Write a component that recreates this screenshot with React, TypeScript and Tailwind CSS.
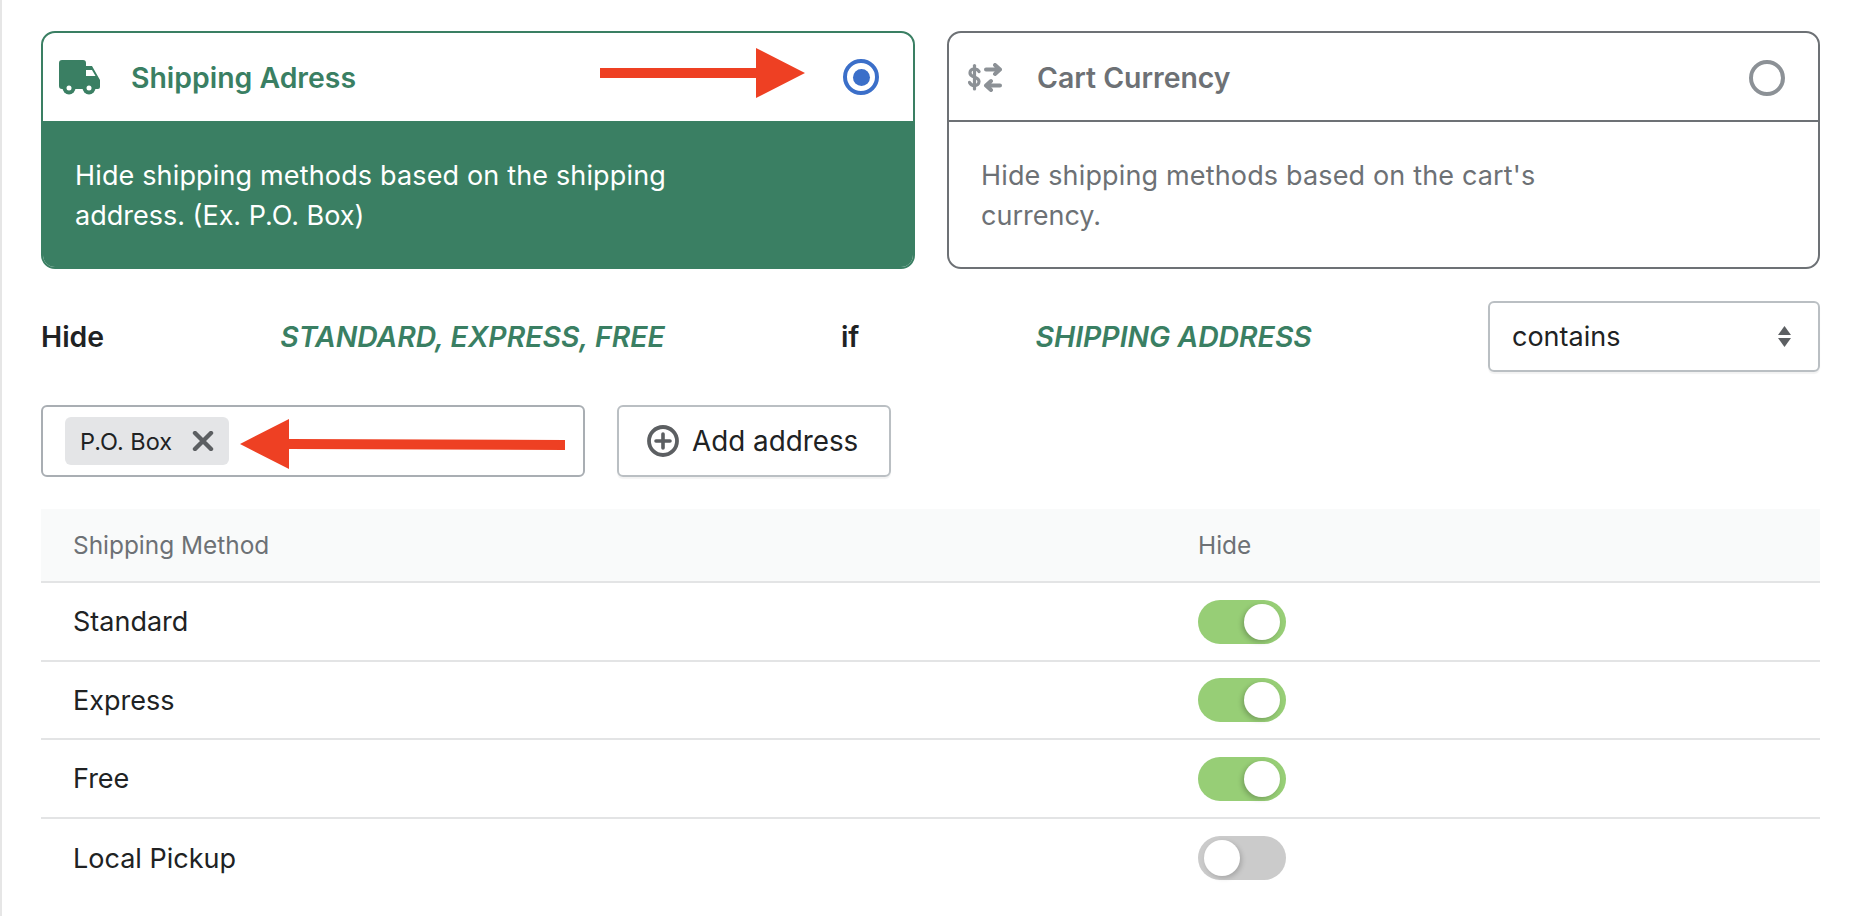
const FONT = "font-['Inter','Liberation_Sans',sans-serif]";

function Truck() {
  return (
    <svg width="41" height="35" viewBox="0 0 41 35" fill="none">
      <path d="M3 0H24a3 3 0 0 1 3 3V6H33L41 20V27a2 2 0 0 1-2 2H3a3 3 0 0 1-3-3V3a3 3 0 0 1 3-3Z" fill="#3a7f63" />
      <path d="M27 10H33L36.5 16H27Z" fill="#fff" />
      <circle cx="10" cy="28" r="6.5" fill="#3a7f63" />
      <circle cx="10" cy="28" r="2.5" fill="#fff" />
      <circle cx="30" cy="28" r="6.5" fill="#3a7f63" />
      <circle cx="30" cy="28" r="2.5" fill="#fff" />
    </svg>
  );
}

function DollarSwap() {
  return (
    <svg width="34" height="29" viewBox="0 0 34 29" fill="none" stroke="#8c9196" strokeLinecap="round" strokeLinejoin="round">
      <path d="M11 8.5C10 6.5 8.5 6 6.5 6C3.5 6 2 7.5 2 10C2 15 11 13 11 18.5C11 21 9 22.5 6.5 22.5C4.5 22.5 2.5 21.5 1.5 19.5" strokeWidth="3.2" />
      <path d="M6.5 2.5V26" strokeWidth="3.2" />
      <path d="M18 6.5H32M27 2L32 6.5L27 11" strokeWidth="4" />
      <path d="M32 22.5H18M23 18L18 22.5L23 27" strokeWidth="4" />
    </svg>
  );
}

function Toggle({ on }: { on: boolean }) {
  return (
    <div
      className={
        on
          ? "flex h-[44px] w-[88px] items-center justify-end rounded-full bg-[#97ce76] pr-[6px]"
          : "flex h-[44px] w-[88px] items-center justify-start rounded-full bg-[#cbcbcb] pl-[6px]"
      }
    >
      <div
        className={
          on
            ? "h-[36px] w-[36px] rounded-full bg-white shadow-[-2px_2px_5px_rgba(0,0,0,0.22)]"
            : "h-[36px] w-[36px] rounded-full bg-white shadow-[2px_2px_5px_rgba(0,0,0,0.18)]"
        }
      />
    </div>
  );
}

const rows = [
  { name: "Standard", on: true, cls: "h-[79px] border-b-2 border-[#e3e4e5]" },
  { name: "Express", on: true, cls: "h-[78px] border-b-2 border-[#e3e4e5]" },
  { name: "Free", on: true, cls: "h-[79px] border-b-2 border-[#e3e4e5]" },
  { name: "Local Pickup", on: false, cls: "h-[78px]" },
];

export default function App() {
  return (
    <div className={`${FONT} relative h-[916px] w-[1860px] overflow-hidden border-l-2 border-[#e6e6e6] bg-white pl-[39px] pr-[40px] pt-[31px] text-[27px] text-[#202223]`}>
      <div className="grid grid-cols-[874px_873px] gap-[32px]">
        <div className="h-[238px] overflow-hidden rounded-[14px] border-2 border-[#3a7f63]">
          <div className="flex h-[88px] items-center pl-[16px] pr-[34px]">
            <Truck />
            <span className="ml-[31px] flex-1 pt-[2px] text-[28.4px] font-semibold text-[#3a7f63]">Shipping Adress</span>
            <div className="flex h-[36px] w-[36px] items-center justify-center rounded-full border-[4px] border-[#3b6fc9]">
              <div className="h-[17px] w-[17px] rounded-full bg-[#3b6fc9]" />
            </div>
          </div>
          <div className="h-[148px] bg-[#3a7f63] pl-[32px] pt-[35px] leading-[40px] text-white">
            <span className="tracking-[0.15px]">Hide shipping methods based on the shipping</span>
            <br />
            address. (Ex. P.O. Box)
          </div>
        </div>
        <div className="h-[238px] overflow-hidden rounded-[14px] border-2 border-[#6d7175]">
          <div className="flex h-[89px] items-center border-b-2 border-[#6d7175] pl-[19px] pr-[33px] pt-[2px]">
            <DollarSwap />
            <span className="ml-[35px] flex-1 pt-[1px] text-[28.4px] font-semibold text-[#6d7175]">Cart Currency</span>
            <div className="h-[36px] w-[36px] rounded-full border-[4px] border-[#8c9196]" />
          </div>
          <div className="pl-[32px] pt-[34px] leading-[40px] text-[#6d7175]">
            <span className="tracking-[0.15px]">Hide shipping methods based on the cart's</span>
            <br />
            currency.
          </div>
        </div>
      </div>

      <div className="mt-[32px] flex h-[71px] items-center justify-between">
        <span className="pt-[2px] text-[28.4px] font-semibold">Hide</span>
        <span className="pt-[2px] text-[28.4px] font-semibold italic text-[#3a7f63]">STANDARD, EXPRESS, FREE</span>
        <span className="pt-[2px] text-[28.4px] font-semibold">if</span>
        <span className="pt-[2px] text-[28.4px] font-semibold italic text-[#3a7f63]">SHIPPING ADDRESS</span>
        <div className="flex h-[71px] w-[332px] items-center justify-between rounded-[6px] border-2 border-[#babfc3] pl-[22px] pr-[27px] shadow-[0_2px_1px_rgba(0,0,0,0.05)]">
          <span className="pt-[2px]">contains</span>
          <svg width="13" height="21" viewBox="0 0 13 21" fill="#5c5f62">
            <path d="M6.5 0L13 9H0Z" />
            <path d="M0 12H13L6.5 21Z" />
          </svg>
        </div>
      </div>

      <div className="mt-[33px] flex h-[72px] gap-[32px]">
        <div className="flex h-[72px] w-[544px] items-center rounded-[6px] border-2 border-[#a9aeb3] pl-[22px]">
          <div className="flex h-[48px] w-[164px] items-center justify-between rounded-[6px] bg-[#e4e5e7] pl-[15px] pr-[15px] text-[23.5px]">
            <span className="pt-[2px]">P.O. Box</span>
            <svg width="22" height="20" viewBox="0 0 22 20" fill="none" stroke="#5c5f62" strokeWidth="4.4" strokeLinecap="round">
              <path d="M3 2L19 18M19 2L3 18" />
            </svg>
          </div>
        </div>
        <div className="flex h-[72px] w-[274px] items-center rounded-[6px] border-2 border-[#babfc3] pl-[28px] shadow-[0_2px_1px_rgba(0,0,0,0.05)]">
          <svg width="32" height="32" viewBox="0 0 32 32" fill="none" stroke="#5c5f62">
            <circle cx="16" cy="16" r="14" strokeWidth="3.8" />
            <path d="M16 9V23M9 16H23" strokeWidth="3.6" strokeLinecap="round" />
          </svg>
          <span className="ml-[13px] pt-[1px] text-[27.8px]">Add address</span>
        </div>
      </div>

      <div className="mt-[32px]">
        <div className="flex h-[74px] items-center border-b-2 border-[#e3e4e5] bg-[#f9fafa] pl-[32px] text-[24.4px] text-[#6d7175]">
          <span className="w-[1125px]">Shipping Method</span>
          <span>Hide</span>
        </div>
        {rows.map((r) => (
          <div key={r.name} className={`flex items-center pl-[32px] ${r.cls}`}>
            <span className="w-[1125px] pt-[2px]">{r.name}</span>
            <Toggle on={r.on} />
          </div>
        ))}
      </div>

      <svg className="absolute left-[-2px] top-0" width="1860" height="916" viewBox="0 0 1860 916" fill="#ee4023">
        <path d="M600 68H756V48L805 73L756 98V78H600Z" />
        <path d="M240 444L289 419V439L565 440V450L289 449V469Z" />
      </svg>
    </div>
  );
}
